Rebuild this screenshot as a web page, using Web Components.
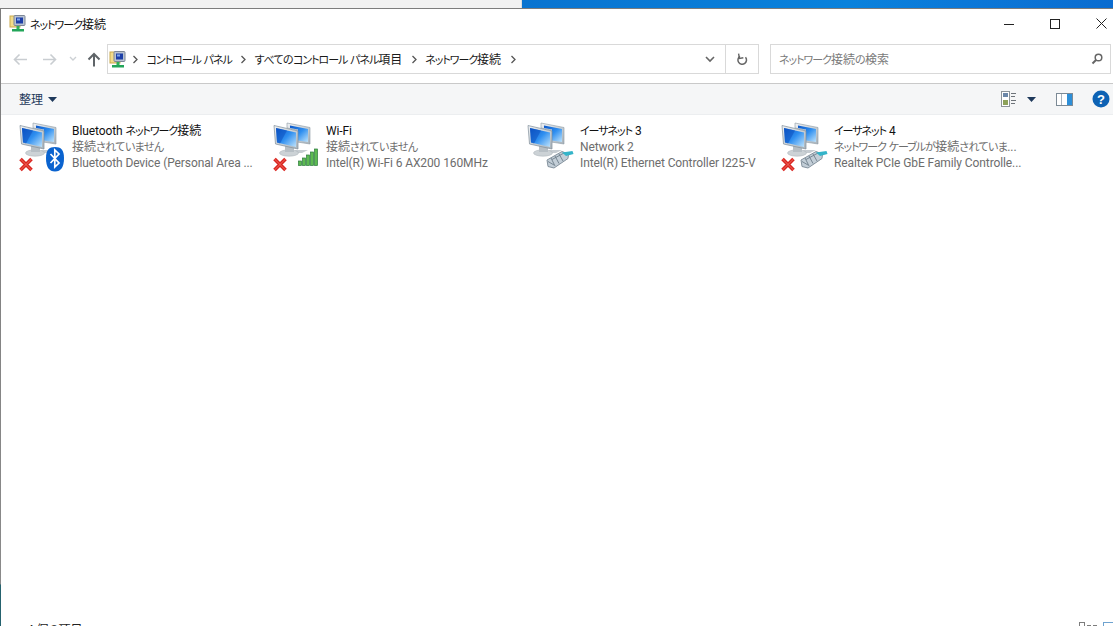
<!DOCTYPE html>
<html lang="ja"><head><meta charset="utf-8"><title>ネットワーク接続</title>
<style>
html,body{margin:0;height:626px;overflow:hidden;background:#fff;font-family:Roboto,"Noto Sans CJK JP",sans-serif;font-size:12px}
body{display:flex;flex-direction:column}
</style></head><body>
<desk-strip></desk-strip>
<net-window>
  <title-bar><jp-text>ネットワーク接続</jp-text></title-bar>
  <nav-bar></nav-bar>
  <cmd-bar></cmd-bar>
  <item-grid>
    <net-item name="Bluetooth ネットワーク接続" status="接続されていません" device="Bluetooth Device (Personal Area ..." kind="bt" off></net-item>
    <net-item name="Wi-Fi" status="接続されていません" device="Intel(R) Wi-Fi 6 AX200 160MHz" kind="wifi" off></net-item>
    <net-item name="イーサネット 3" status="Network 2" device="Intel(R) Ethernet Controller I225-V" kind="eth"></net-item>
    <net-item name="イーサネット 4" status="ネットワーク ケーブルが接続されていま..." device="Realtek PCIe GbE Family Controlle..." kind="eth" off></net-item>
  </item-grid>
  <status-bar><jp-text>4 個の項目</jp-text></status-bar>
</net-window>
<script>
const FONT='Roboto,"Noto Sans CJK JP",sans-serif';
const CPL=`<svg width="17" height="17" viewBox="0 0 17 17"><rect x="1" y="1" width="10" height="11" fill="#f3dc8a" stroke="#c9a94e"/><rect x="5" y="0.5" width="11" height="10" rx="1" fill="#b9c3d2" stroke="#7d8796"/><rect x="7" y="2.5" width="7" height="6" fill="#1d3fa8"/><rect x="8" y="3.5" width="3" height="2" fill="#7fa6ea"/><rect x="7.500" y="11" width="3" height="3" fill="#2fae5b"/><rect x="3" y="14" width="12" height="2.500" fill="#22a559"/></svg>`;
function define(name,css,html){
  customElements.define(name,class extends HTMLElement{
    connectedCallback(){
      if(this.shadowRoot)return;
      const r=this.attachShadow({mode:'open'});
      r.innerHTML=`<style>${css}</style>`+(typeof html==='function'?html(this):html);
    }
  });
}
define('jp-text',`:host{display:inline;white-space:pre;font-feature-settings:"palt";letter-spacing:-.1px}
.k{font-size:11px;letter-spacing:-1.05px}.h{font-size:11px;letter-spacing:-.6px}.c{letter-spacing:0}`,
 h=>h.textContent.replace(/[\u30A0-\u30FF]+|[\u3040-\u309F]+|[\u4E00-\u9FFF]+/g,m=>{
   const c=m.charCodeAt(0);
   return `<span class="${c>=0x4E00?'c':c>=0x30A0?'k':'h'}">${m}</span>`;
 }));
define('desk-strip',`:host{display:flex;height:8px;flex:none}
.a{width:521px;background:#f1f1f1;border-right:1px solid #ddd}
.b{flex:1;background:linear-gradient(100deg,#0a74d0 0%,#0a82dc 55%,#0b78d8 75%,#0a6cd0 100%);}`,`<div class="a"></div><div class="b"></div>`);
define('net-window',`:host{display:flex;flex-direction:column;flex:1;min-height:0;background:#fff;border-top:1px solid #4d5a62;border-left:1px solid;border-image:linear-gradient(#7c7c7c 0,#8a8a8a 575px,#25626e 576px) 1;border-right:0;border-bottom:0;overflow:hidden}`,`<slot></slot>`);
define('title-bar',`:host{display:flex;align-items:center;height:29px;flex:none;padding-left:8px;color:#111;font:12px ${FONT}}
.t{margin-left:4px;flex:1;padding-bottom:1px}
.b{width:46px;height:29px;display:flex;align-items:center;justify-content:center}
.b.l{width:35px;justify-content:flex-start;padding-left:18px;box-sizing:border-box}
svg{display:block}`,
`${CPL}<span class="t"><slot></slot></span>
<div class="b"><svg width="10" height="10"><path d="M0 5.500H10" stroke="#222"/></svg></div>
<div class="b"><svg width="10" height="10"><rect x=".5" y=".5" width="9" height="9" fill="none" stroke="#222"/></svg></div>
<div class="b l"><svg width="11" height="11"><path d="M.5 .5L10.500 10.500M10.500 .5L.5 10.500" stroke="#222"/></svg></div>`);
define('nav-bar',`:host{display:flex;align-items:center;height:30px;margin-top:6px;flex:none;font:12px ${FONT};color:#1a1a1a}
.nav{width:106px;display:flex;align-items:center;flex:none;height:30px}
.nav svg{display:block;flex:none}
.box{display:flex;align-items:center;height:28px;border:1px solid #d9d9d9;background:#fff}
.addr{width:586px;flex:none;border-right:0}
.lbl{padding-bottom:1px}
.crumb{display:flex;align-items:center}
.crumb svg{margin:0 8.5px}
.sp{flex:1}
.ref{width:32px;flex:none;display:flex;justify-content:center}
.dd{width:31px;height:28px;display:flex;align-items:center;justify-content:center;border-right:1px solid #d9d9d9}
.search{margin-left:11px;width:341px;flex:none;color:#7a7a7a;padding-left:8px;box-sizing:border-box;height:30px}
.search .s{flex:1;padding-bottom:1px}
.search svg{margin-right:7px}
.ic{margin-left:1px;display:block}.ic svg{display:block}`,
()=>{const ch=`<svg width="6" height="9" viewBox="0 0 6 9"><path d="M1.500 1L5 4.500L1.500 8" fill="none" stroke="#555" stroke-width="1.300"/></svg>`;
return `<div class="nav">
<svg style="margin-left:12px" width="15" height="13" viewBox="0 0 15 13"><path d="M14 6.500H2M6.500 1.500L1.500 6.500L6.500 11.500" fill="none" stroke="#c9cdd1" stroke-width="1.600"/></svg>
<svg style="margin-left:14px" width="15" height="13" viewBox="0 0 15 13"><path d="M1 6.500H13M8.500 1.500L13.500 6.500L8.500 11.500" fill="none" stroke="#c9cdd1" stroke-width="1.600"/></svg>
<svg style="margin-left:12px" width="8" height="6" viewBox="0 0 8 6"><path d="M1 1L4 4L7 1" fill="none" stroke="#ccd0d4" stroke-width="1.400"/></svg>
<svg style="margin-left:10px" width="14" height="15" viewBox="0 0 14 15"><path d="M7 14.500V2M1.500 7.500L7 2L12.500 7.500" fill="none" stroke="#5f6468" stroke-width="2"/></svg>
</div>
<div class="box addr"><span class="ic">${CPL}</span>
<span class="crumb" style="margin-left:-2.500px">${ch}</span><span class="lbl"><jp-text>コントロール パネル</jp-text></span>
<span class="crumb">${ch}</span><span class="lbl"><jp-text>すべてのコントロール パネル項目</jp-text></span>
<span class="crumb">${ch}</span><span class="lbl"><jp-text>ネットワーク接続</jp-text></span>
<span class="crumb">${ch}</span><span class="sp"></span>
</div>
<div class="box" style="border-left:0;flex:none"><div class="dd"><svg width="10" height="7" viewBox="0 0 10 7"><path d="M1 1L5 5L9 1" fill="none" stroke="#666" stroke-width="1.600"/></svg></div>
<div class="ref"><svg width="12" height="13" viewBox="0 0 12 13"><path d="M9.500 4.200A4.300 4.300 0 1 1 4 3.300" fill="none" stroke="#666" stroke-width="1.500"/><path d="M3 .5V5.300H7" fill="none" stroke="#666" stroke-width="1.400" transform="rotate(-10 4 3)"/></svg></div></div>
<div class="box search"><span class="s"><jp-text>ネットワーク接続の検索</jp-text></span><svg width="12" height="12" viewBox="0 0 12 12"><circle cx="7.500" cy="4.500" r="3.300" fill="none" stroke="#666" stroke-width="1.500"/><path d="M5 7L1.500 10.500" stroke="#666" stroke-width="2"/></svg></div>`});
define('cmd-bar',`:host{display:flex;align-items:center;height:30px;margin-top:9px;flex:none;background:#f5f6f7;border-top:1px solid #c9c9c9;border-bottom:1px solid #eceef0;font:12px ${FONT};color:#1e395b}
.l{margin-left:18px;padding-bottom:1px}.tri{margin-left:5px}
.sp{flex:1}svg{display:block;flex:none}`,
`<span class="l">整理</span><svg class="tri" width="9" height="5" viewBox="0 0 9 5"><path d="M0 0H9L4.500 5Z" fill="#1e395b"/></svg><span class="sp"></span>
<svg width="16" height="16" viewBox="0 0 16 16"><rect x=".5" y=".5" width="8" height="15" fill="#fff" stroke="#8e9499"/><rect x="2" y="2" width="5" height="4" fill="#6c87a8"/><rect x="2" y="9" width="5" height="5" fill="#8ea25a"/><path d="M10 2.500H15M10 5.500H14M10 9.500H15M10 12.500H14" stroke="#6d7379"/></svg>
<svg style="margin-left:10px" width="9" height="5" viewBox="0 0 9 5"><path d="M0 0H9L4.500 5Z" fill="#1e395b"/></svg>
<svg style="margin-left:20px" width="17" height="13" viewBox="0 0 17 13"><rect x=".5" y=".5" width="16" height="12" fill="#fff" stroke="#7c8a96"/><rect x="11" y="1" width="5" height="11" fill="#2d8fd8"/><path d="M5.500 1V12" stroke="#a8b4be"/></svg>
<svg style="margin-left:19px;margin-right:3px" width="18" height="18" viewBox="0 0 18 18"><circle cx="9" cy="9" r="8.500" fill="#0d62b4"/><text x="9" y="13.500" text-anchor="middle" font-family="Liberation Sans" font-weight="700" font-size="13" fill="#fff">?</text></svg>`);
define('item-grid',`:host{display:grid;grid-template-columns:repeat(4,254px);align-content:start;flex:1;min-height:0;padding:7px 0 0 17px}`,`<slot></slot>`);
const MON=`<defs>
<linearGradient id="s" x1="0" y1="0" x2="1" y2="1"><stop offset="0" stop-color="#0a55c8"/><stop offset=".5" stop-color="#2f8ff0"/><stop offset="1" stop-color="#bfe3fb"/></linearGradient>
<linearGradient id="f" x1="0" y1="0" x2="1" y2="1"><stop offset="0" stop-color="#eef1f4"/><stop offset="1" stop-color="#a9b3bb"/></linearGradient></defs>
<path d="M23 28H36L30 31H24Z" fill="#c6ccd1"/>
<path d="M15 1L38 5.500V22L25 20V8L15 6Z" fill="url(#f)" stroke="#8b98a3" stroke-width=".6"/>
<path d="M18 3.500L36 7V20L26 18.500V7.500L18 6Z" fill="url(#s)"/>
<ellipse cx="17" cy="31" rx="9.500" ry="3.200" fill="#ccd2d6" stroke="#a7afb5" stroke-width=".5"/>
<path d="M13 23L22 25L22 30H13Z" fill="#b7bfc5"/>
<path d="M2 3.500L26 9V27L3.500 22Z" fill="url(#f)" stroke="#7f8e9a" stroke-width=".7"/>
<path d="M4 6L24 10.500V25L5 20.500Z" fill="url(#s)"/>
<path d="M4 6L15 8.500L8 21.500L5 20.500Z" fill="#0d50bf" opacity=".55"/>`;
const X=`<path d="M2.500 37L13.500 48M13.500 37L2.500 48" stroke="#d9231f" stroke-width="3.600"/><path d="M2.500 37L13.500 48M13.500 37L2.500 48" stroke="#f06a5c" stroke-width="1"/>`;
const OVER={
 bt:`<path d="M28 36C28 28 31 25 37 25C43 25 46 28 46 36C46 45 43 49.500 37 49.500C31 49.500 28 45 28 36Z" fill="#0a63cf"/><path d="M32.500 32L41 41L36.800 45V28L41 32L32.500 41" fill="none" stroke="#fff" stroke-width="1.700"/>`,
 wifi:`<g stroke="#2a7a3c" stroke-width=".7" fill="#5cba50"><rect x="26.500" y="39" width="3" height="4.500"/><rect x="30.500" y="36" width="3" height="7.500"/><rect x="34.500" y="33" width="3" height="10.500"/><rect x="38.500" y="30" width="3" height="13.500"/><rect x="42.500" y="27" width="3" height="16.500"/></g>`,
 eth:`<path d="M21 38L36 29.500L42.500 32L42 36.500L28 46L22 44.500Z" fill="#c3ced7" stroke="#7a8995" stroke-width=".9"/><path d="M25 36L29 44M29 34L33 41.500M33 32L37 39M22 39.500L28 43M26 37.500L38 31" stroke="#6f7f8b" stroke-width=".9" fill="none"/><path d="M36 30.500L46.500 29L47.500 32L40 34Z" fill="#34b4c9"/>`
};
define('net-icon',`:host{display:block;width:48px;height:50px;flex:none}svg{display:block;overflow:visible}`,
 h=>`<svg width="48" height="50" viewBox="0 0 48 50">${MON}${OVER[h.getAttribute('kind')]||''}${h.hasAttribute('off')?X:''}</svg>`);
define('net-item',`:host{display:flex;gap:6px;height:50px;font:12px/16px ${FONT};color:#6d6d6d;white-space:nowrap}
.t div{height:16px}.n{color:#111}.t{padding-top:1px}`,
 h=>`<net-icon kind="${h.getAttribute('kind')}" ${h.hasAttribute('off')?'off':''}></net-icon><div class="t"><div class="n"><jp-text>${h.getAttribute('name')}</jp-text></div><div><jp-text>${h.getAttribute('status')}</jp-text></div><div><jp-text>${h.getAttribute('device')}</jp-text></div></div>`);
define('status-bar',`:host{display:flex;height:8px;flex:none;overflow:hidden;padding-left:26px;font:12px/16px ${FONT};color:#222;box-sizing:border-box;padding-top:4px;align-items:flex-start}
.sp{flex:1}svg{display:block;flex:none}`,
`<slot></slot><span class="sp"></span><svg width="18" height="5"><rect x=".5" y=".5" width="5" height="8" fill="none" stroke="#7d7d7d"/><path d="M8 3.500H12M14 3.500H18" stroke="#7d7d7d"/></svg><svg style="margin:0 0 0 6px" width="10" height="5"><rect x=".5" y=".5" width="20" height="10" fill="#fff" stroke="#6fa3d0"/></svg>`);
</script>
</body></html>
